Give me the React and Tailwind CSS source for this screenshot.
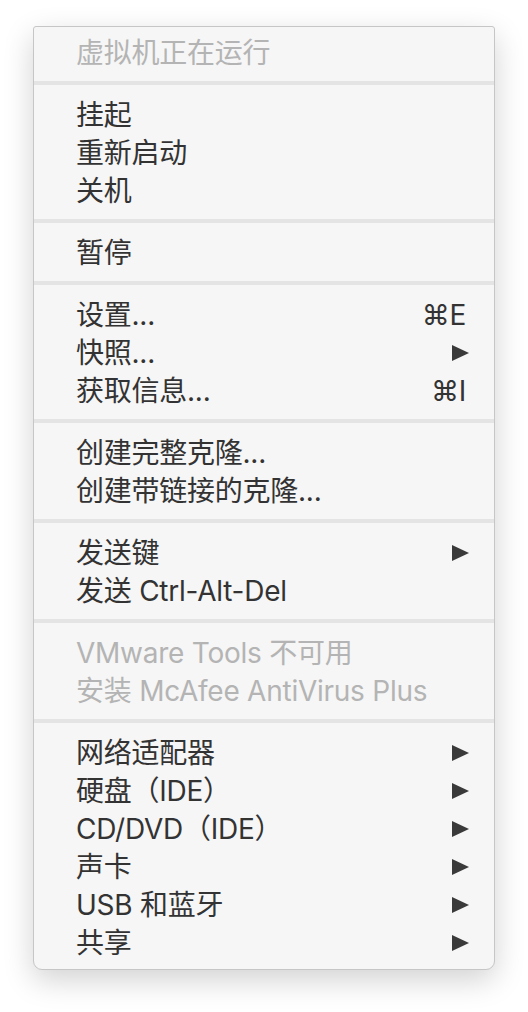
import React from 'react';

const groups = [
  [{ label: '虚拟机正在运行', disabled: true }],
  [{ label: '挂起' }, { label: '重新启动' }, { label: '关机' }],
  [{ label: '暂停' }],
  [
    { label: '设置...', shortcut: '⌘E' },
    { label: '快照...', submenu: true },
    { label: '获取信息...', shortcut: '⌘I' },
  ],
  [{ label: '创建完整克隆...' }, { label: '创建带链接的克隆...' }],
  [{ label: '发送键', submenu: true }, { label: '发送 Ctrl-Alt-Del' }],
  [
    { label: 'VMware Tools 不可用', disabled: true },
    { label: '安装 McAfee AntiVirus Plus', disabled: true },
  ],
  [
    { label: '网络适配器', submenu: true },
    { label: '硬盘（IDE）', submenu: true },
    { label: 'CD/DVD（IDE）', submenu: true },
    { label: '声卡', submenu: true },
    { label: 'USB 和蓝牙', submenu: true },
    { label: '共享', submenu: true },
  ],
];

function Arrow() {
  return (
    <svg width="17" height="16" viewBox="0 0 17 16" className="mr-[-3px]">
      <polygon points="0,0 17,8 0,16" fill="#3a3a3a" />
    </svg>
  );
}

function MenuItem({ item }) {
  return (
    <div
      className={
        'flex h-[38px] items-center justify-between pl-[42px] pr-[28px] pt-[2px] ' +
        (item.disabled ? 'text-[#b4b4b4]' : 'text-[#333333]')
      }
    >
      <span>{item.label}</span>
      {item.shortcut && <span>{item.shortcut}</span>}
      {item.submenu && <Arrow />}
    </div>
  );
}

export default function App() {
  return (
    <div className="min-h-screen bg-white pt-[26px] pl-[33px]">
      <div
        className="w-[462px] rounded-t-[3px] rounded-b-[9px] border border-[#c6c6c6] bg-[#f6f6f6] pt-[6px] pb-[8px] shadow-[0_10px_30px_rgba(0,0,0,0.18)] text-[28px] leading-none tracking-[-0.25px]"
        style={{ fontFamily: 'Inter, "Noto Sans CJK SC", sans-serif' }}
      >
        {groups.map((g, i) => (
          <div key={i}>
            {i > 0 && (
              <div className="flex h-[24px] items-center">
                <div className="h-[4px] w-full bg-[#e4e4e4]" />
              </div>
            )}
            {g.map((item) => (
              <MenuItem key={item.label} item={item} />
            ))}
          </div>
        ))}
      </div>
    </div>
  );
}
